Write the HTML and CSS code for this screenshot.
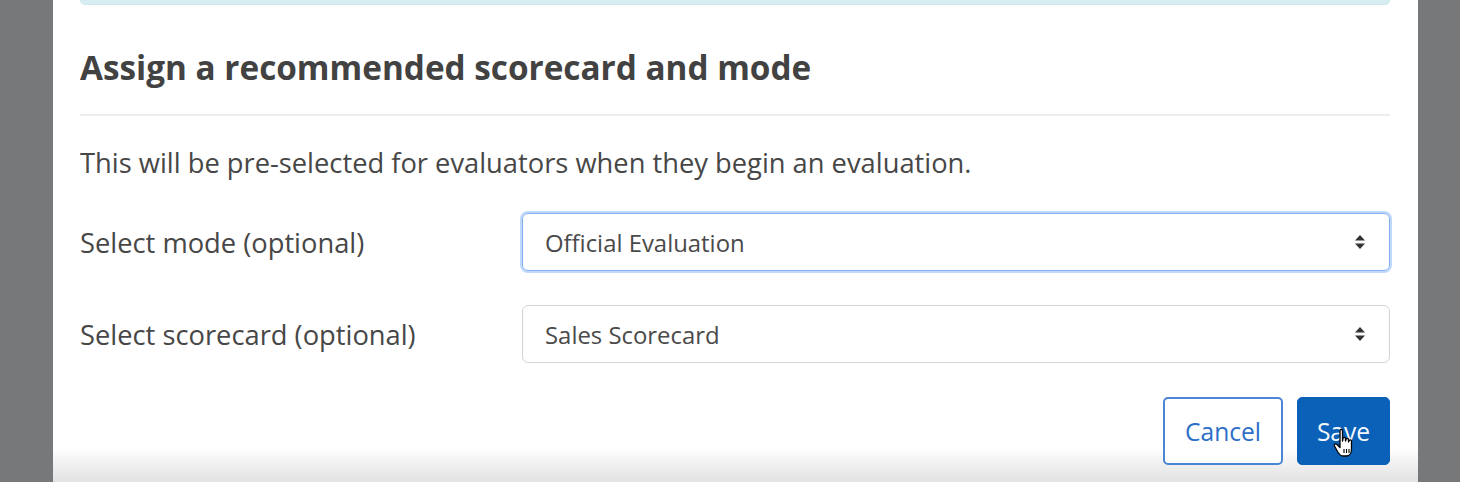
FILE: index.html
```html
<!DOCTYPE html>
<html lang="en">
<head>
    <meta charset="UTF-8" />
    <title>Assign scorecard</title>
    <link rel="stylesheet" href="styles.css">
</head>
<body>

<div class="modal">
    <div class="notice"></div>

    <h2 class="modal-title">Assign a recommended scorecard and mode</h2>

    <p class="intro">This will be pre-selected for evaluators when they begin an evaluation.</p>

    <div class="field">
        <label class="field-label">Select mode (optional)</label>
        <div class="select focused">
            <span>Official Evaluation</span>
            <svg class="caret" width="12" height="16" viewBox="0 0 12 16">
                <path d="M6 1 L11 6.5 L1 6.5 Z M1 9.5 L11 9.5 L6 15 Z" fill="#333"/>
            </svg>
        </div>
    </div>

    <div class="field">
        <label class="field-label">Select scorecard (optional)</label>
        <div class="select">
            <span>Sales Scorecard</span>
            <svg class="caret" width="12" height="16" viewBox="0 0 12 16">
                <path d="M6 1 L11 6.5 L1 6.5 Z M1 9.5 L11 9.5 L6 15 Z" fill="#333"/>
            </svg>
        </div>
    </div>

    <div class="actions">
        <button class="btn btn-cancel">Cancel</button>
        <button class="btn btn-save">Save
            <svg class="cursor" width="26" height="32" viewBox="0 0 26 32">
                <path d="M8 2.5 C8 1 10.5 1 10.5 2.5 L10.5 13 L11 10.5 C11 9 13.5 9 13.5 10.5 L13.5 13 L14 11.5 C14 10 16.5 10 16.5 11.5 L16.5 14 L17 13 C17 11.5 19.5 11.5 19.5 13 L19.5 21 C19.5 25 17.5 28 14.5 28 L11 28 C8.5 28 7 26 5.5 23.5 L2.5 18 C1.5 16.5 3.5 15 5 16.5 L8 19.5 Z" fill="#fff" stroke="#000" stroke-width="1.3" stroke-linejoin="round"/>
                <path d="M12 21 L12 25 M14.5 21 L14.5 25 M17 21 L17 25" stroke="#000" stroke-width="1.1"/>
            </svg>
        </button>
    </div>
</div>

</body>
</html>
```

FILE: styles.css
```css
/* Backdrop */
body {
    margin: 0;
    background: #777879;
    font-family: 'Open Sans', 'Noto Sans', sans-serif;
    height: 482px;
    overflow: hidden;
}

/* Modal */
.modal {
    margin-left: 53px;
    width: 1365px;
    height: 482px;
    box-sizing: border-box;
    padding: 0 28px 0 27px;
    background: linear-gradient(to bottom, #ffffff 448px, #ededed 468px, #e2e2e2 482px);
}

.notice {
    height: 4px;
    background: #d7edf1;
    border: 1px solid #cfe7ec;
    border-top: none;
    border-radius: 0 0 9px 9px;
}

.modal-title {
    margin: 42px 0 0;
    padding-bottom: 27px;
    border-bottom: 2px solid #ececec;
    font-size: 33.3px;
    line-height: 40px;
    font-weight: 700;
    color: #424242;
}

.intro {
    margin: 29px 0 0;
    font-size: 27.3px;
    line-height: 36px;
    color: #474747;
}

/* Fields */
.field {
    display: flex;
    align-items: center;
    margin-top: 32px;
}

.field + .field {
    margin-top: 34px;
}

.field-label {
    width: 442px;
    flex-shrink: 0;
    font-size: 27.3px;
    color: #474747;
}

.select {
    flex: 1;
    height: 58px;
    box-sizing: border-box;
    display: flex;
    align-items: center;
    justify-content: space-between;
    padding: 0 23px 0 22px;
    border: 1px solid #d4d4d4;
    border-radius: 6px;
    font-size: 23.9px;
    color: #4a4a4a;
}

.select.focused {
    border-color: #80aef0;
    box-shadow: 0 0 0 2px #c2d8fa;
}

/* Actions */
.actions {
    display: flex;
    justify-content: flex-end;
    gap: 14px;
    margin-top: 34px;
}

.btn {
    height: 68px;
    padding: 0 10px;
    border-radius: 5px;
    font-family: 'Open Sans', 'Noto Sans', sans-serif;
    font-size: 24.6px;
    cursor: pointer;
}

.btn-cancel {
    width: 120px;
    background: #ffffff;
    border: 2px solid #4a86d6;
    color: #2d6fc8;
}

.btn-save {
    position: relative;
    width: 93px;
    background: #0b60b8;
    border: 1px solid #0b60b8;
    color: #f4f8fd;
}

.cursor {
    position: absolute;
    left: 34px;
    top: 30px;
}
```
